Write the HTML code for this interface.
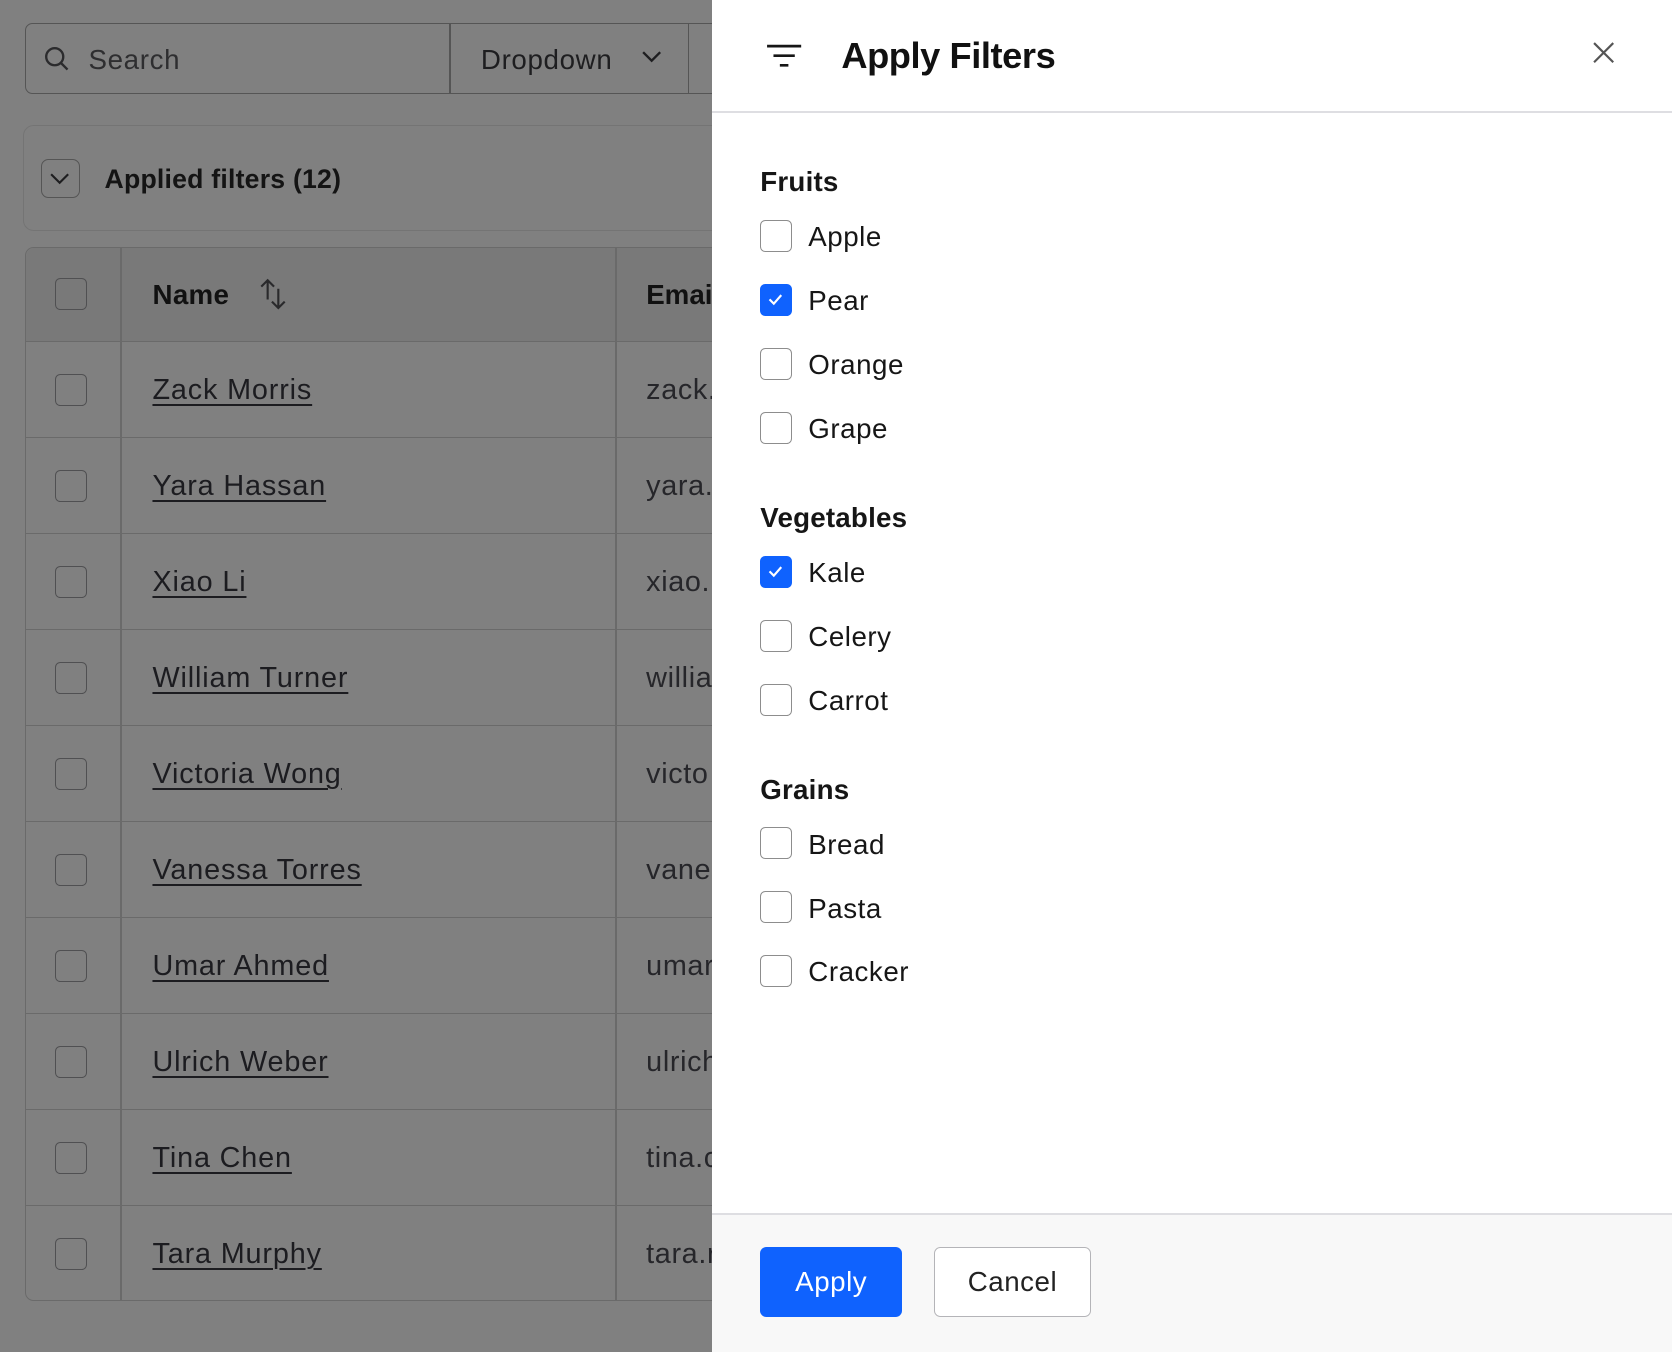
<!DOCTYPE html>
<html><head><meta charset="utf-8"><style>
html{zoom:1.06633}
body{margin:0;width:1568px;height:1266px;position:relative;overflow:hidden;background:#808080;font-family:"Liberation Sans",sans-serif;color:#111}
.a{position:absolute}
.cb{position:absolute;width:30px;height:30px;border:1.5px solid #505052;border-radius:5px;box-sizing:border-box}
.row{position:absolute;left:24px;width:660px;height:90px;border-top:1.5px solid #6a6a6a}
.row .cb{left:28px;top:30px}
.row .n{position:absolute;left:119px;top:30px;font-size:27px;letter-spacing:0.8px;color:#1c1c20;text-decoration:underline;text-underline-offset:5px;text-decoration-thickness:2px}
.row .e{position:absolute;left:582px;top:30px;font-size:27px;letter-spacing:0.6px;color:#26262a}
.p{position:absolute;left:668px;top:0;width:900px;height:1266px;background:#fff}
.h{font-size:26px;font-weight:bold;position:absolute;left:45px;color:#161616;letter-spacing:0.2px}
.it{position:absolute;left:45px;height:30px}
.it .c{position:absolute;left:0;top:0;width:30px;height:30px;border:1.5px solid #8d8d8d;border-radius:5px;box-sizing:border-box;background:#fff}
.it .c.on{background:#0f62fe;border-color:#0f62fe}
.it span{position:absolute;left:45px;top:1px;font-size:26px;letter-spacing:0.5px;white-space:nowrap;color:#161616}
</style></head><body>
<div class="a" style="left:23px;top:22px;width:680px;height:64px;border:1.5px solid #555;border-radius:7px;"></div>
<div class="a" style="left:421px;top:22px;width:1.5px;height:66px;background:#555"></div>
<div class="a" style="left:645px;top:22px;width:1.5px;height:66px;background:#555"></div>
<svg class="a" style="left:40px;top:42px" width="26" height="26" viewBox="0 0 26 26"><circle cx="11" cy="11" r="8" fill="none" stroke="#2b2b2d" stroke-width="2.2"/><path d="M17 17l6 6" stroke="#2b2b2d" stroke-width="2.2"/></svg>
<div class="a" style="left:83px;top:41px;font-size:26px;letter-spacing:0.6px;color:#2e2e30">Search</div>
<div class="a" style="left:451px;top:41px;font-size:26px;letter-spacing:0.6px;color:#1e1e20">Dropdown</div>
<svg class="a" style="left:601px;top:46px" width="20" height="14" viewBox="0 0 20 14"><path d="M2 3l8 8 8-8" fill="none" stroke="#1e1e20" stroke-width="2.2"/></svg>
<div class="a" style="left:22px;top:117px;width:700px;height:98px;border:1.5px solid #747474;border-radius:10px"></div>
<div class="a" style="left:38px;top:149px;width:37px;height:37px;border:1.5px solid #555;border-radius:7px;box-sizing:border-box"></div>
<svg class="a" style="left:46px;top:160px" width="20" height="14" viewBox="0 0 20 14"><path d="M2 3l8 8 8-8" fill="none" stroke="#1e1e20" stroke-width="2"/></svg>
<div class="a" style="left:98px;top:154px;font-size:25px;font-weight:bold;color:#141414;letter-spacing:0.2px">Applied filters (12)</div>
<div class="a" style="left:23px;top:232px;width:700px;height:988px;border:1.5px solid #6a6a6a;border-radius:8px;box-sizing:border-box"></div>
<div class="a" style="left:24px;top:233px;width:660px;height:87px;background:#797979;border-radius:8px 0 0 0"></div>
<div class="a" style="left:113px;top:232px;width:1.5px;height:988px;background:#6a6a6a"></div>
<div class="a" style="left:577px;top:232px;width:1.5px;height:988px;background:#6a6a6a"></div>
<div class="cb" style="left:52px;top:261px"></div>
<div class="a" style="left:143px;top:262px;font-size:26px;font-weight:bold;color:#111;letter-spacing:0.3px">Name</div>
<svg class="a" style="left:241px;top:259px" width="30" height="34" viewBox="0 0 30 34"><path d="M10 22V4M4 10l6-6 6 6M20 12v18M14 24l6 6 6-6" fill="none" stroke="#2a2a2c" stroke-width="2"/></svg>
<div class="a" style="left:606px;top:262px;font-size:26px;font-weight:bold;color:#111">Email</div>
<div class="row" style="top:320px"><div class="cb"></div><div class="n">Zack Morris</div><div class="e">zack.</div></div>
<div class="row" style="top:410px"><div class="cb"></div><div class="n">Yara Hassan</div><div class="e">yara.</div></div>
<div class="row" style="top:500px"><div class="cb"></div><div class="n">Xiao Li</div><div class="e">xiao.l</div></div>
<div class="row" style="top:590px"><div class="cb"></div><div class="n">William Turner</div><div class="e">willia</div></div>
<div class="row" style="top:680px"><div class="cb"></div><div class="n">Victoria Wong</div><div class="e">victo</div></div>
<div class="row" style="top:770px"><div class="cb"></div><div class="n">Vanessa Torres</div><div class="e">vanes</div></div>
<div class="row" style="top:860px"><div class="cb"></div><div class="n">Umar Ahmed</div><div class="e">umar</div></div>
<div class="row" style="top:950px"><div class="cb"></div><div class="n">Ulrich Weber</div><div class="e">ulrich</div></div>
<div class="row" style="top:1040px"><div class="cb"></div><div class="n">Tina Chen</div><div class="e">tina.c</div></div>
<div class="row" style="top:1130px"><div class="cb"></div><div class="n">Tara Murphy</div><div class="e">tara.r</div></div>
<div class="p">
<svg class="a" style="left:50px;top:41px" width="34" height="24" viewBox="0 0 34 24"><path d="M1 2h32M7 11h20M13 20h8" stroke="#161616" stroke-width="2.5"/></svg>
<div class="a" style="left:121px;top:33px;font-size:34px;font-weight:bold;letter-spacing:-0.4px;color:#111">Apply Filters</div>
<svg class="a" style="left:826px;top:39px" width="20" height="20" viewBox="0 0 20 20"><path d="M1 1l18 18M19 1L1 19" stroke="#555" stroke-width="2"/></svg>
<div class="a" style="left:0;top:104px;width:900px;height:2px;background:#dedee2"></div>
<div class="h" style="top:156px">Fruits</div>
<div class="it" style="top:206px"><div class="c"></div><span>Apple</span></div>
<div class="it" style="top:266px"><div class="c on"><svg width="27" height="27" viewBox="0 0 27 27"><path d="M8 13.5l4 4 7-8" fill="none" stroke="#fff" stroke-width="2"/></svg></div><span>Pear</span></div>
<div class="it" style="top:326px"><div class="c"></div><span>Orange</span></div>
<div class="it" style="top:386px"><div class="c"></div><span>Grape</span></div>
<div class="h" style="top:471px">Vegetables</div>
<div class="it" style="top:521px"><div class="c on"><svg width="27" height="27" viewBox="0 0 27 27"><path d="M8 13.5l4 4 7-8" fill="none" stroke="#fff" stroke-width="2"/></svg></div><span>Kale</span></div>
<div class="it" style="top:581px"><div class="c"></div><span>Celery</span></div>
<div class="it" style="top:641px"><div class="c"></div><span>Carrot</span></div>
<div class="h" style="top:726px">Grains</div>
<div class="it" style="top:776px"><div class="c"></div><span>Bread</span></div>
<div class="it" style="top:836px"><div class="c"></div><span>Pasta</span></div>
<div class="it" style="top:896px"><div class="c"></div><span>Cracker</span></div>
<div class="a" style="left:0;top:1138px;width:900px;height:128px;background:#f8f8f8;border-top:2px solid #dedee2"></div>
<div class="a" style="left:45px;top:1169px;width:133px;height:66px;background:#0f62fe;border-radius:6px;color:#fff;font-size:26px;letter-spacing:0.5px;line-height:66px;text-align:center">Apply</div>
<div class="a" style="left:208px;top:1169px;width:147px;height:66px;box-sizing:border-box;border:1.5px solid #b4b4b8;background:#fff;border-radius:6px;color:#222;font-size:26px;letter-spacing:0.5px;line-height:63px;text-align:center">Cancel</div>
</div>
</body></html>
